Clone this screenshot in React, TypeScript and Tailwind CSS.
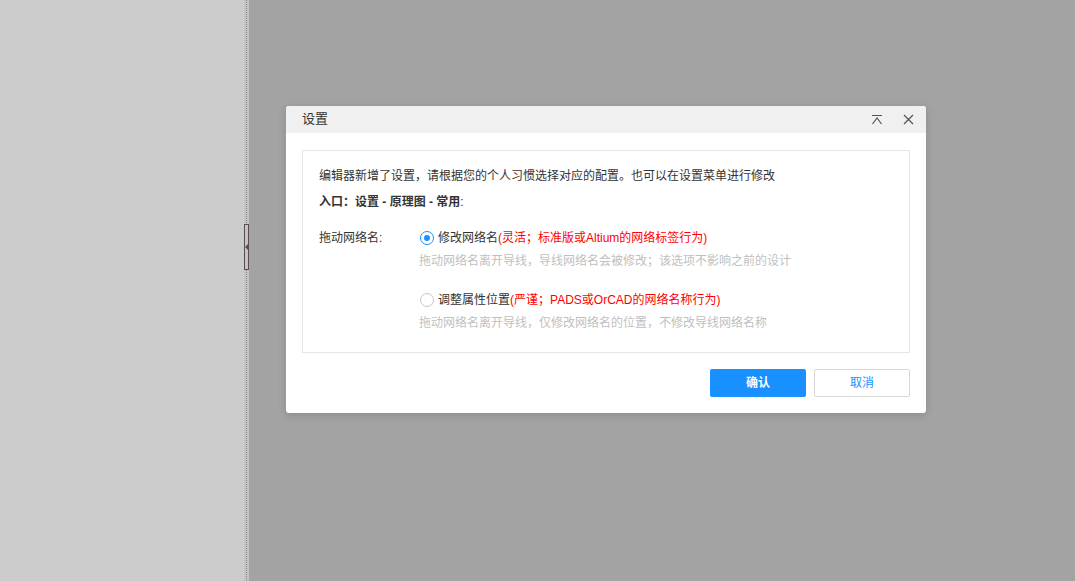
import React from 'react';

const font = { fontFamily: '"Liberation Sans", "Noto Sans CJK SC", sans-serif' };

interface OptionProps {
  checked: boolean;
  title: string;
  note: string;
  desc: string;
}

const Option = ({ checked, title, note, desc }: OptionProps) => {
  return (
    <div className="flex flex-col">
      <div className="flex items-center h-5">
        {checked ? (
          <span className="w-[14px] h-[14px] rounded-full border border-[#1890ff] flex items-center justify-center ml-[1px]">
            <span className="w-[6px] h-[6px] rounded-full bg-[#1890ff]"></span>
          </span>
        ) : (
          <span className="w-[14px] h-[14px] rounded-full border border-[#c8c8c8] ml-[1px]"></span>
        )}
        <span className="ml-[4px] text-[#333]">{title}</span>
        <span className="text-[#ff0000]">{note}</span>
      </div>
      <div className="h-5 leading-5 mt-[3px] text-[#bfbfbf]">{desc}</div>
    </div>
  );
};

export default function App() {
  return (
    <div className="flex h-[581px] w-[1075px] overflow-hidden text-[12px]" style={font}>
      <div className="w-[244px] bg-[#cccccc]"></div>
      {/* splitter */}
      <div className="relative w-[5px] bg-[#c4c4c4] flex justify-center">
        <div className="w-[1px] h-full border-l border-dotted border-[#8a8a8a]"></div>
        <div className="absolute left-0 top-[224px] w-[5px] h-[46px] border border-[#5a4f4f] bg-[#c4c4c4] flex items-center">
          <span className="w-0 h-0 border-y-[3px] border-y-transparent border-r-[3px] border-r-[#5a4f4f]"></span>
        </div>
      </div>
      <div className="flex-1 bg-[#a3a3a3] pt-[106px] pl-[37px]">
        <div className="w-[640px] bg-white rounded-[3px] shadow-[0_2px_8px_rgba(0,0,0,0.15)] overflow-hidden">
          <div className="h-[27px] bg-[#f0f0f0] flex items-center pl-4 pr-3">
            <span className="text-[13px] text-[#333] flex-1 -mt-[1px]">设置</span>
            <svg width="12" height="12" viewBox="0 0 12 12" className="mr-[20px]" fill="none" stroke="#555" strokeWidth="1.2">
              <path d="M1 1.5h10" />
              <path d="M1.5 10l4.5-6 4.5 6" />
            </svg>
            <svg width="11" height="11" viewBox="0 0 11 11" fill="none" stroke="#555" strokeWidth="1.3">
              <path d="M1 1l9 9M10 1l-9 9" />
            </svg>
          </div>
          <div className="pl-4 pr-[16px] pt-[17px] pb-4">
            <div className="border border-[#e6e6e6] pt-[15px] pb-[19px] px-4 text-[#333]">
              <div className="h-5 leading-5">编辑器新增了设置，请根据您的个人习惯选择对应的配置。也可以在设置菜单进行修改</div>
              <div className="h-5 leading-5 mt-[6px] font-bold">
                入口：设置 - 原理图 - 常用<span className="font-normal">:</span>
              </div>
              <div className="flex mt-[16px]">
                <div className="w-[100px] h-5 leading-5">拖动网络名:</div>
                <div className="flex flex-col gap-[19px]">
                  <Option
                    checked
                    title="修改网络名"
                    note="(灵活；标准版或Altium的网络标签行为)"
                    desc="拖动网络名离开导线，导线网络名会被修改；该选项不影响之前的设计"
                  />
                  <Option
                    checked={false}
                    title="调整属性位置"
                    note="(严谨；PADS或OrCAD的网络名称行为)"
                    desc="拖动网络名离开导线，仅修改网络名的位置，不修改导线网络名称"
                  />
                </div>
              </div>
            </div>
            <div className="flex justify-end gap-[8px] mt-4">
              <button className="w-[96px] h-[28px] rounded-[2px] bg-[#1890ff] text-white font-bold">确认</button>
              <button className="w-[96px] h-[28px] rounded-[2px] border border-[#d9d9d9] bg-white text-[#1890ff]">取消</button>
            </div>
          </div>
        </div>
      </div>
    </div>
  );
}
